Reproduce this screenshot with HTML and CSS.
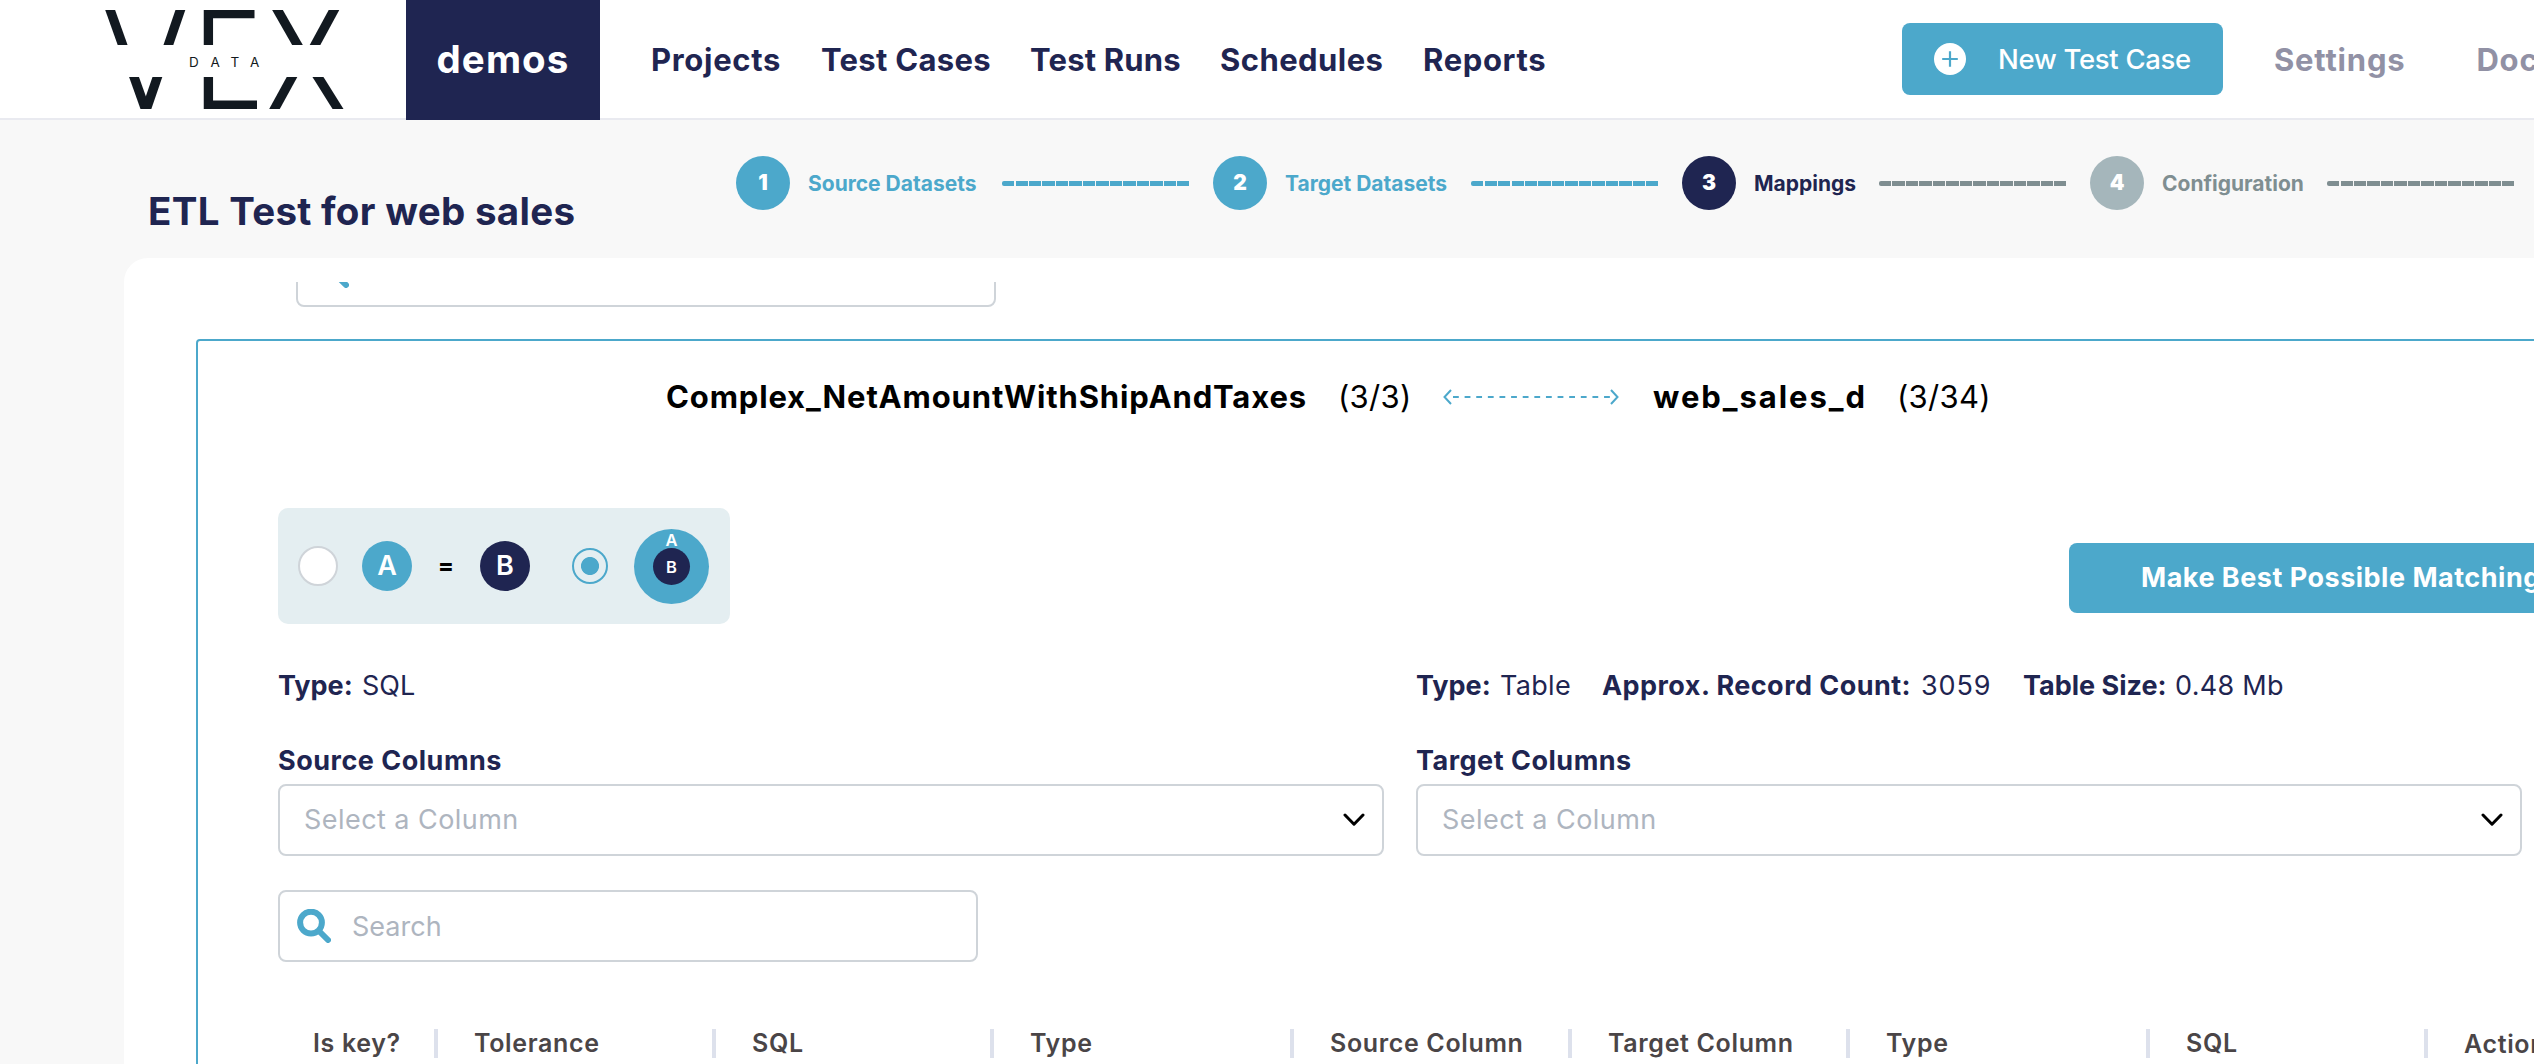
FILE: index.html
```
<!DOCTYPE html>
<html lang="en">
<head>
<meta charset="utf-8">
<title>Vex Data - ETL Test for web sales</title>
<link rel="stylesheet" href="styles.css">
</head>
<body>
<header class="topbar">
  <svg class="logo" width="250" height="118" viewBox="100 0 250 118">
    <defs>
      <clipPath id="bands"><rect x="100" y="10" width="250" height="35"/><rect x="100" y="77" width="250" height="32"/></clipPath>
    </defs>
    <g clip-path="url(#bands)" stroke="#121920" stroke-width="9.3">
      <line x1="106.6" y1="0" x2="149" y2="119"/>
      <line x1="183.8" y1="0" x2="143" y2="119"/>
      <line x1="208.4" y1="10" x2="208.4" y2="109"/>
      <line x1="271.8" y1="0" x2="303.2" y2="55"/>
      <line x1="339.4" y1="0" x2="309.6" y2="55"/>
      <line x1="297.5" y1="67" x2="269" y2="119"/>
      <line x1="311.7" y1="67" x2="344.3" y2="119"/>
      <line x1="204" y1="14" x2="254.5" y2="14" stroke-width="8.6"/>
      <line x1="204" y1="104.8" x2="257" y2="104.8" stroke-width="8.6"/>
    </g>
    <text class="logo-word" x="189 210.5 230.5 250" y="67">DATA</text>
  </svg>
  <div class="workspace">demos</div>
  <nav class="nav">
    <a class="n1">Projects</a><a class="n2">Test Cases</a><a class="n3">Test Runs</a><a class="n4">Schedules</a><a class="n5">Reports</a>
  </nav>
  <button class="new-case">
    <svg width="32" height="32" viewBox="0 0 32 32"><circle cx="16" cy="16" r="16" fill="#fff"/><path d="M16 8.2v15.6M8.2 16h15.6" stroke="#4ca8cb" stroke-width="2.2"/></svg>
    <span>New Test Case</span>
  </button>
  <div class="side-links"><a>Settings</a><a>Docs</a></div>
</header>

<section class="subhead">
  <h1>ETL Test for web sales</h1>
  <ol class="steps">
    <li class="done"><b>1</b><span class="s1">Source Datasets</span><i></i></li>
    <li class="done"><b>2</b><span class="s2">Target Datasets</span><i></i></li>
    <li class="active"><b>3</b><span class="s3">Mappings</span><i></i></li>
    <li class="todo"><b>4</b><span class="s4">Configuration</span><i></i></li>
  </ol>
</section>

<main class="card">
  <div class="scroll">
    <div class="search upper">
      <svg width="34" height="34" viewBox="0 0 34 34"><circle cx="14" cy="13.6" r="10.9"/><path d="M22 22l9 9"/></svg>
    </div>
    <section class="mapping">
      <div class="pair">
        <strong class="src">Complex_NetAmountWithShipAndTaxes</strong><span class="cnt-a">(3/3)</span>
        <svg class="link" width="178" height="18" viewBox="0 0 178 18"><path d="M9 2L2.500 9L9 16M169 2l6.500 7L169 16" /><path d="M11 9h157" stroke-dasharray="5.800 5.820"/></svg>
        <strong class="tgt">web_sales_d</strong><span class="cnt-b">(3/34)</span>
      </div>
      <div class="modes">
        <div class="mode-box">
          <span class="radio"></span>
          <span class="dot a">A</span><span class="eq">=</span><span class="dot b">B</span>
          <span class="radio on"></span>
          <span class="nested"><em>A</em><span>B</span></span>
        </div>
        <button class="best">Make Best Possible Matching</button>
      </div>
      <div class="cols">
        <div class="col">
          <p class="meta"><b class="m1">Type:</b><span>SQL</span></p>
          <label>Source Columns</label>
          <div class="select">Select a Column<svg width="22" height="14" viewBox="0 0 22 14"><path d="M2 2l9 9.200L20 2"/></svg></div>
        </div>
        <div class="col">
          <p class="meta"><b class="m1">Type:</b><span class="m2">Table</span><b class="m3">Approx. Record Count:</b><span class="m4">3059</span><b class="m5">Table Size:</b><span class="m6">0.48 Mb</span></p>
          <label>Target Columns</label>
          <div class="select">Select a Column<svg width="22" height="14" viewBox="0 0 22 14"><path d="M2 2l9 9.200L20 2"/></svg></div>
        </div>
      </div>
      <div class="search">
        <svg width="34" height="34" viewBox="0 0 34 34"><circle cx="14" cy="13.600" r="10.900"/><path d="M22 22l9 9"/></svg>
        <span>Search</span>
      </div>
      <div class="thead">
        <span>Is key?</span><span>Tolerance</span><span>SQL</span><span>Type</span><span>Source Column</span><span>Target Column</span><span>Type</span><span>SQL</span><span class="last">Action</span>
      </div>
    </section>
  </div>
</main>
</body>
</html>
```
FILE: styles.css
```
* { box-sizing: border-box; }
html, body { height: 100%; overflow: hidden; }
body {
  margin: 0;
  display: flex;
  flex-direction: column;
  background: #f8f8f8;
  color: #1f2551;
  font-family: Inter, "Liberation Sans", sans-serif;
  white-space: nowrap;
}
button { border: 0; font: inherit; color: #fff; background: #4ca8cb; }

/* Top bar */
.topbar {
  height: 120px;
  flex: none;
  display: flex;
  align-items: center;
  padding-left: 100px;
  background: #fff;
  border-bottom: 2px solid #e9eaf0;
}
.logo { flex: none; margin-right: 56px; }
.logo-word { font-size: 13.5px; fill: #121920; }
.workspace {
  flex: none;
  width: 194px;
  height: 120px;
  margin-bottom: -2px;
  background: #1f2551;
  color: #fff;
  font-size: 38.5px;
  font-weight: 700;
  line-height: 119px;
  letter-spacing: 1.1px;
  text-align: center;
}
.nav {
  flex: none;
  width: 1251px;
  margin-left: 51px;
  display: grid;
  grid-template-columns: 170px 209px 190px 203px auto;
  font-size: 31px;
  font-weight: 700;
}
.n1 { letter-spacing: .7px; }
.n2 { letter-spacing: .3px; }
.n3 { letter-spacing: .2px; }
.n4 { letter-spacing: .45px; }
.n5 { letter-spacing: .65px; }
.new-case {
  flex: none;
  display: flex;
  align-items: center;
  gap: 32px;
  width: 321px;
  height: 72px;
  padding: 0 0 0 32px;
  border-radius: 8px;
  font-size: 27.5px;
  font-weight: 500;
  letter-spacing: -.3px;
}
.side-links {
  display: flex;
  gap: 71px;
  margin-left: 51px;
  font-size: 31px;
  font-weight: 700;
  letter-spacing: .8px;
  color: #9191a5;
}

/* Title and progress steps */
.subhead { flex: none; height: 138px; display: flex; padding: 36px 0 0 148px; }
h1 {
  flex: none;
  width: 588px;
  margin: 31px 0 0;
  font-size: 38.5px;
  line-height: 48px;
  letter-spacing: .3px;
}
.steps {
  display: flex;
  gap: 24px;
  margin: 0;
  padding: 0;
  list-style: none;
  font-size: 21px;
  font-weight: 700;
}
.steps li { flex: none; display: flex; align-items: center; height: 54px; }
.steps b {
  width: 54px;
  height: 54px;
  margin-right: 18px;
  border-radius: 50%;
  background: currentColor;
  line-height: 54px;
  text-align: center;
}
.steps b::first-letter { color: #fff; }
.steps i {
  width: 187px;
  height: 5px;
  margin-left: 24px;
  border-radius: 2px 0 0 2px;
  background: repeating-linear-gradient(90deg, currentColor 0 12.3px, transparent 12.3px 13.5px);
}
.done { color: #4ca8cb; }
.active { color: #1f2551; }
.todo { color: #7f8e91; }
.todo b { background: #a5b6bb; }
.active i { color: #7f8e91; }
.s1 { width: 170px; }
.s2 { width: 162px; }
.s3 { width: 101px; }
.s4 { width: 141px; }

/* Card */
.card {
  flex: 1;
  min-height: 0;
  margin-left: 124px;
  padding: 24px 0 0 72px;
  border-radius: 24px 0 0 0;
  background: #fff;
}
.scroll { height: 100%; overflow: hidden; }
.search {
  display: flex;
  align-items: center;
  width: 700px;
  height: 72px;
  padding-left: 17px;
  border: 2px solid #cfd4d9;
  border-radius: 8px;
  font-size: 27px;
  color: #aeb5bf;
}
.search svg { margin-right: 21px; fill: none; stroke: #4ca8cb; stroke-width: 6; stroke-linecap: round; }
.search.upper { margin: -47px 0 32px 100px; }

.mapping {
  width: 2600px;
  height: 1000px;
  padding: 0 0 0 80px;
  border: 2px solid #4ca8cb;
  border-radius: 4px;
}
.pair {
  display: flex;
  align-items: center;
  height: 111px;
  padding-left: 388px;
  font-size: 31px;
  color: #000;
}
.src { width: 672px; letter-spacing: .85px; }
.cnt-a { width: 104px; letter-spacing: .3px; }
.link { width: 178px; margin-right: 33px; fill: none; stroke: #4ca8cb; stroke-width: 2; }
.tgt { width: 244px; letter-spacing: 1.95px; }
.cnt-b { letter-spacing: .3px; }

.modes { display: flex; margin-top: 56px; }
.mode-box {
  display: flex;
  align-items: center;
  width: 452px;
  height: 116px;
  padding-left: 20px;
  border-radius: 10px;
  background: #e4eef1;
}
.radio {
  width: 40px;
  height: 40px;
  border: 2px solid #cfd4d9;
  border-radius: 50%;
  background: #fff;
}
.radio.on {
  width: 36px;
  height: 36px;
  margin-left: 42px;
  border-color: #4ca8cb;
  background: radial-gradient(circle, #4ca8cb 8.6px, transparent 9.4px);
}
.dot {
  width: 50px;
  height: 50px;
  border-radius: 50%;
  color: #fff;
  font-size: 27px;
  font-weight: 600;
  line-height: 49px;
  text-align: center;
}
.a { margin-left: 24px; background: #4ca8cb; }
.b { background: #1f2551; }
.eq { width: 68px; text-align: center; color: #000; font-size: 24px; font-weight: 700; line-height: 50px; }
.nested {
  display: flex;
  flex-direction: column;
  align-items: center;
  width: 75px;
  height: 75px;
  margin: 1px 0 0 26px;
  border-radius: 50%;
  background: #4ca8cb;
  color: #fff;
  font-size: 16.5px;
  font-weight: 600;
}
.nested em { height: 19px; line-height: 22px; font-style: normal; }
.nested span { width: 37px; height: 37px; border-radius: 50%; background: #1f2551; line-height: 38px; text-align: center; }
.best {
  width: 600px;
  height: 70px;
  margin: 35px 0 0 1339px;
  padding: 0 0 2px 72px;
  border-radius: 8px;
  font-size: 27px;
  font-weight: 700;
  letter-spacing: .5px;
  text-align: left;
}

.cols { display: flex; gap: 32px; margin-top: 44px; }
.col { width: 1106px; }
.meta { display: flex; margin: 0; font-size: 27px; line-height: 36px; }
.m1 { width: 84px; }
.m2 { width: 102px; letter-spacing: .3px; }
.m3 { width: 319px; letter-spacing: .45px; }
.m4 { width: 102px; letter-spacing: .9px; }
.m5 { width: 152px; }
.m6 { letter-spacing: .3px; }
label { display: block; margin: 39px 0 5px; font-size: 27px; font-weight: 700; line-height: 36px; letter-spacing: .5px; }
.select {
  display: flex;
  align-items: center;
  justify-content: space-between;
  height: 72px;
  padding: 0 17px 1px 24px;
  border: 2px solid #cfd4d9;
  border-radius: 8px;
  font-size: 27px;
  letter-spacing: .45px;
  color: #aeb5bf;
}
.select svg { fill: none; stroke: #000; stroke-width: 3; stroke-linecap: round; stroke-linejoin: round; }
.mapping > .search { margin-top: 34px; }

/* Column headings */
.thead {
  display: grid;
  grid-template-columns: 160px 278px 278px 300px 278px 278px 300px 278px 200px;
  margin-top: 67px;
  color: #4a4547;
  font-size: 25px;
  font-weight: 600;
  line-height: 29px;
  letter-spacing: .65px;
}
.thead span { height: 29px; padding-left: 36px; border-right: 4px solid #dde1ec; }
.thead span:first-child { padding-left: 35px; }
.thead .last { padding-top: 1px; border: 0; }
```
